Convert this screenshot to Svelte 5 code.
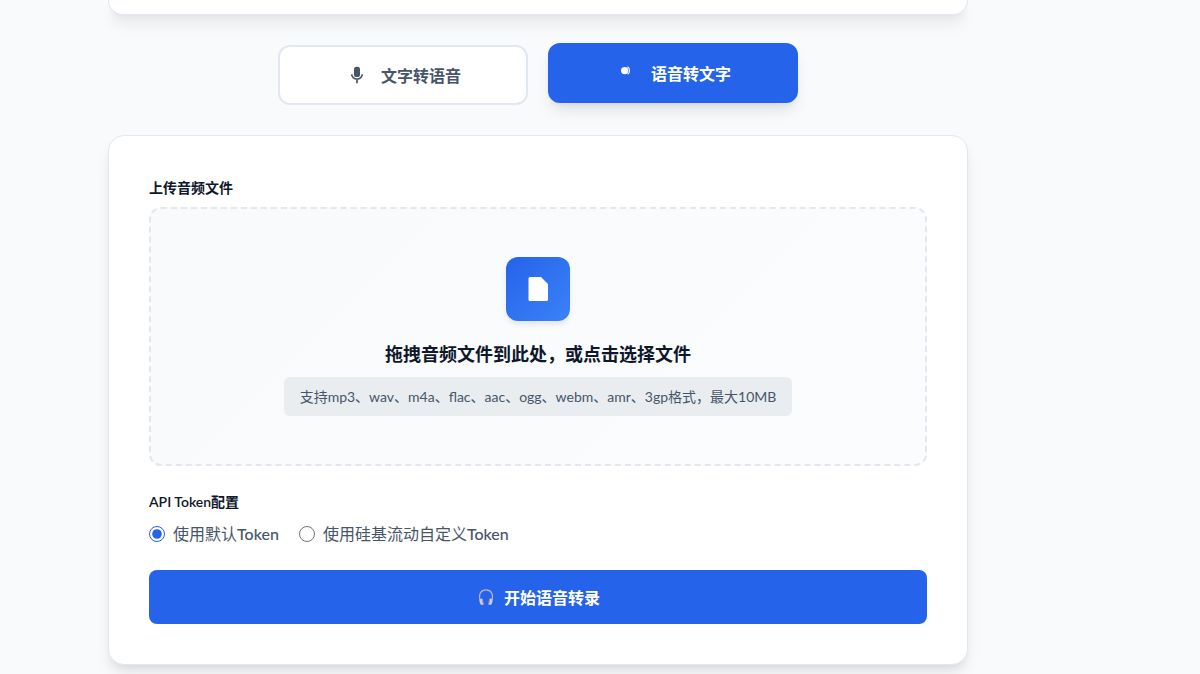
<script lang="ts">
  let mode: 'tts' | 'stt' = 'stt';
  let tokenMode = 'default';
  let fileName = '';

  function handleFile(event: Event) {
    const input = event.target as HTMLInputElement;
    fileName = input.files?.[0]?.name || '';
  }
</script>

<div class="page">
  <div class="container">
    <header class="intro"></header>

    <!-- Mode switcher -->
    <nav class="mode-switcher">
      <button type="button" class="mode-btn" class:active={mode === 'tts'} on:click={() => (mode = 'tts')}>
        <svg class="mode-icon" viewBox="0 0 24 24" aria-hidden="true">
          <rect x="9" y="3.800" width="6" height="10.200" rx="2.600" fill="currentColor" />
          <path d="M6.700 11.200a5.300 4.800 0 0 0 10.600 0M12 16v4.200" fill="none" stroke="currentColor" stroke-width="1.700" />
        </svg>
        <span>文字转语音</span>
      </button>
      <button type="button" class="mode-btn" class:active={mode === 'stt'} on:click={() => (mode = 'stt')}>
        <svg class="mode-icon" viewBox="0 0 24 24" aria-hidden="true">
          <circle cx="9.700" cy="9.600" r="3.700" fill="currentColor" />
          <path d="M12.400 5.800c2.800 1.400 2.800 5.800.300 7.400" fill="none" stroke="currentColor" stroke-width="1.100" />
        </svg>
        <span>语音转文字</span>
      </button>
    </nav>

    <main class="card">
      <div class="form-group">
        <label class="form-label" for="audio-file">上传音频文件</label>
        <label class="drop-zone" for="audio-file">
          <span class="upload-icon">
            <svg viewBox="0 0 32 32" aria-hidden="true">
              <path d="M8 4h11l7 7v15.500a1.500 1.500 0 0 1-1.500 1.500H8a1.500 1.500 0 0 1-1.500-1.500v-21A1.500 1.500 0 0 1 8 4z" fill="currentColor" />
            </svg>
          </span>
          <span class="upload-text">{fileName || '拖拽音频文件到此处，或点击选择文件'}</span>
          <span class="upload-hint">支持mp3、wav、m4a、flac、aac、ogg、webm、amr、3gp格式，最大10MB</span>
        </label>
        <input class="file-input" id="audio-file" type="file" accept="audio/*" on:change={handleFile} />
      </div>

      <fieldset class="form-group">
        <legend class="form-label">API Token配置</legend>
        <div class="radio-row">
          <label class="radio">
            <input type="radio" value="default" bind:group={tokenMode} />
            <span>使用默认<span class="latin">Token</span></span>
          </label>
          <label class="radio">
            <input type="radio" value="custom" bind:group={tokenMode} />
            <span>使用硅基流动自定义<span class="latin">Token</span></span>
          </label>
        </div>
      </fieldset>

      <button type="button" class="submit-btn">
        <svg class="submit-icon" viewBox="0 0 16 16" aria-hidden="true">
          <path d="M2.200 11.500C.2 5 3 .9 8 .9s7.800 4.100 5.800 10.600" fill="none" stroke="#b9b4c4" stroke-width="1.300" />
          <path d="M1.600 10.200l2.400-.7 1.300 6-1.500.4q-2.800-1-2.200-5.700z" fill="#d3c9d2" />
          <path d="M14.400 10.200l-2.400-.7-1.300 6 1.500.4q2.800-1 2.200-5.700z" fill="#d3c9d2" />
          <path d="M4.200 9.600l1.200 6M11.800 9.600l-1.200 6" stroke="#a59eab" stroke-width="1" />
        </svg>
        <span>开始语音转录</span>
      </button>
    </main>
  </div>
</div>

<style>
  :global(body) {
    margin: 0;
    background: #f8fafc;
    color: #0f172a;
    font-family: Lato, "Noto Sans CJK SC", sans-serif;
  }

  .page {
    padding-right: 124px;
    overflow: hidden;
  }

  .container {
    max-width: 860px;
    margin: 0 auto;
    padding-bottom: 40px;
  }

  .intro,
  .card {
    background: #ffffff;
    border: 1px solid #e2e8f0;
    border-radius: 16px;
    box-shadow: 0 10px 15px -3px rgba(0, 0, 0, 0.1), 0 4px 6px -2px rgba(0, 0, 0, 0.05);
  }

  .intro {
    height: 14px;
    border-top: none;
    border-radius: 0 0 16px 16px;
  }

  .mode-switcher {
    display: flex;
    justify-content: center;
    gap: 20px;
    padding: 30px 0;
  }

  .mode-btn {
    display: flex;
    align-items: center;
    justify-content: center;
    gap: 12px;
    width: 250px;
    height: 60px;
    border: 2px solid #e2e8f0;
    border-radius: 12px;
    background: #ffffff;
    color: #475569;
    font: inherit;
    font-size: 16px;
    font-weight: 600;
    cursor: pointer;
  }

  .mode-btn.active {
    background: #2563eb;
    border-color: #2563eb;
    color: #ffffff;
    transform: translateY(-2px);
    box-shadow: 0 10px 15px -3px rgba(0, 0, 0, 0.1), 0 4px 6px -2px rgba(0, 0, 0, 0.05);
  }

  .mode-icon {
    width: 24px;
    height: 24px;
  }

  .card {
    padding: 40px;
  }

  .form-group {
    margin: 0 0 24px;
    padding: 0;
    border: none;
  }

  .form-label {
    display: block;
    margin-bottom: 8px;
    padding: 0;
    font-size: 14px;
    font-weight: 600;
    line-height: 23px;
  }

  .drop-zone {
    display: flex;
    flex-direction: column;
    align-items: center;
    padding: 48px 32px;
    border: 2px dashed #e2e8f0;
    border-radius: 12px;
    background: linear-gradient(135deg, #f8fafc, #fbfcfd);
    cursor: pointer;
  }

  .upload-icon {
    display: flex;
    align-items: center;
    justify-content: center;
    width: 64px;
    height: 64px;
    margin-bottom: 18px;
    border-radius: 12px;
    background: linear-gradient(135deg, #2563eb, #3b82f6);
    color: #ffffff;
    box-shadow: 0 4px 6px -1px rgba(0, 0, 0, 0.1);
  }

  .upload-icon svg {
    width: 32px;
    height: 32px;
  }

  .upload-text {
    margin-bottom: 8px;
    font-size: 18px;
    font-weight: 600;
    line-height: 30px;
  }

  .upload-hint {
    padding: 8px 16px;
    border-radius: 6px;
    background: #e9edf0;
    color: #475569;
    font-size: 14px;
    line-height: 23px;
  }

  .file-input {
    display: none;
  }

  .radio-row {
    display: flex;
    flex-wrap: wrap;
    gap: 20px;
  }

  .radio {
    display: flex;
    align-items: center;
    gap: 8px;
    color: #475569;
    font-size: 16px;
    line-height: 25px;
    cursor: pointer;
  }

  .radio .latin {
    font-weight: 500;
  }

  .radio input {
    width: 16px;
    height: 16px;
    margin: 0;
    accent-color: #2563eb;
  }

  .submit-btn {
    display: flex;
    align-items: center;
    justify-content: center;
    gap: 8px;
    width: 100%;
    height: 54px;
    border: none;
    border-radius: 8px;
    background: #2563eb;
    color: #ffffff;
    font: inherit;
    font-size: 16px;
    font-weight: 600;
    cursor: pointer;
  }

  .submit-icon {
    width: 20px;
    height: 16px;
  }
</style>
